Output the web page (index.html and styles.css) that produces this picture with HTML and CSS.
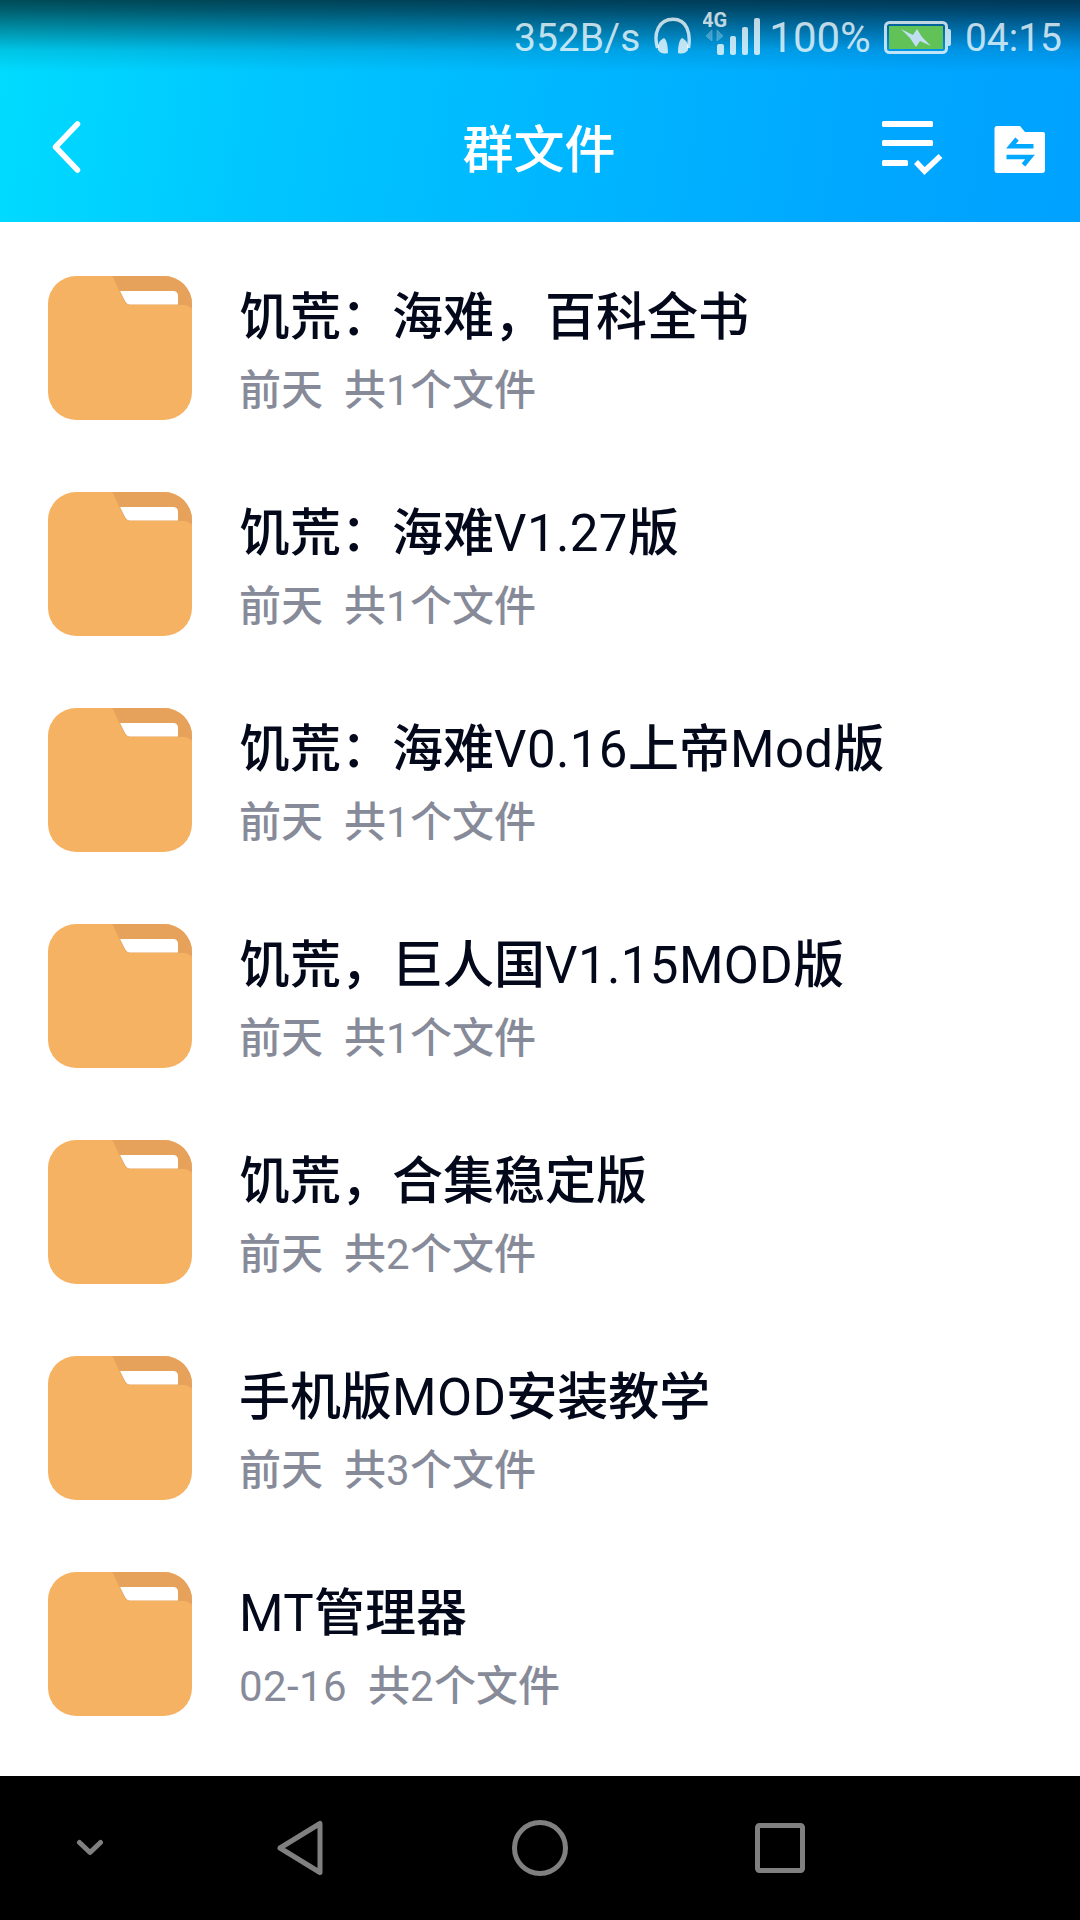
FILE: index.html
```
<!DOCTYPE html>
<html lang="zh-CN">
<head>
    <meta charset="UTF-8">
    <title>群文件</title>
    <link rel="stylesheet" href="styles.css">
</head>
<body>
    <svg class="defs" width="0" height="0">
        <symbol id="folder" viewBox="0 0 144 144">
            <rect width="144" height="144" rx="28" fill="#f6b263"/>
            <path d="M64 0H116A28 28 0 0 1 144 28V33Q141 29 135 29H82Q78 29 76 25L68 8Q66 2 64 0Z" fill="#e6a15b"/>
            <path d="M72 15H125Q130 15 130 20V28.500H82Q79 28.500 77 25Z" fill="#fff"/>
        </symbol>
    </svg>

    <div class="top">
        <div class="status-bar">
            <span class="speed">352B/s</span>
            <svg class="headphones" width="38" height="38" viewBox="0 0 38 38">
                <path d="M3.5 31C-1 16 5 2.300 19 2.300S37 16 34.500 31" fill="none" stroke="currentColor" stroke-width="3.400"/>
                <path d="M10 21C5 23 3 29 4 33C7 37 10 37 14 36C14 30 13 23 10 21ZM28 21C33 23 35 29 34 33C31 37 28 37 24 36C24 30 25 23 28 21Z" fill="currentColor"/>
            </svg>
            <svg class="signal" width="60" height="48" viewBox="0 0 60 48">
                <text x="-1" y="19" class="net">4G</text>
                <path d="M3 27L9 21V32ZM20 27L14 21V32Z" fill="currentColor" opacity=".35" transform="translate(0 1)" stroke="currentColor" stroke-width="1"/>
                <rect x="14" y="36" width="7" height="11" rx="2"/>
                <rect x="27" y="28" width="6" height="19" rx="2"/>
                <rect x="39" y="19" width="6" height="28" rx="2"/>
                <rect x="51" y="10" width="6" height="37" rx="2"/>
            </svg>
            <span class="percent">100%</span>
            <svg class="battery" width="68" height="34" viewBox="0 0 68 34">
                <rect x="1.500" y="1.500" width="61" height="30" rx="4" fill="none" stroke="currentColor" stroke-width="3"/>
                <rect x="5" y="5" width="54" height="23" fill="#61c257"/>
                <path d="M64 8h1q2 0 2 2v13q0 2-2 2h-1z" fill="currentColor"/>
                <path d="M17 8L29 14L33 8L38 16L47 25L36 20L32 26L26 17Z" fill="#c0dff2"/>
            </svg>
            <span class="time">04:15</span>
        </div>
        <div class="header">
            <svg class="back" width="30" height="56" viewBox="0 0 30 56">
                <path d="M26.500 5L4.500 28L26.500 51" fill="none" stroke="#fff" stroke-width="5.500" stroke-linecap="round" stroke-linejoin="round"/>
            </svg>
            <h1>群文件</h1>
            <div class="actions">
                <svg width="62" height="56" viewBox="0 0 62 56">
                    <g fill="#fff">
                        <rect x="1" y="1" width="51" height="6" rx="1.500"/>
                        <rect x="1" y="20" width="51" height="6" rx="1.500"/>
                        <rect x="1" y="40" width="26" height="6" rx="1.500"/>
                    </g>
                    <path d="M35 42L43.500 51L59.500 36" fill="none" stroke="#fff" stroke-width="5.500"/>
                </svg>
                <svg class="transfer" width="52" height="48" viewBox="0 0 52 48">
                    <path d="M3 0H26L31 6H49Q51 6 51 8V44Q51 47 48 47H3Q0.500 47 0.500 44V3Q0.500 0 3 0Z" fill="#fff"/>
                    <path d="M39.500 20.200H17L23 13M12.500 31H36L29.500 39" fill="none" stroke="#02a7ff" stroke-width="4.600"/>
                </svg>
            </div>
        </div>
    </div>

    <div class="list">
        <div class="item">
            <svg class="folder"><use href="#folder"/></svg>
            <div class="info">
                <div class="name">饥荒：海难，百科全书</div>
                <div class="meta">前天  共<span>1</span>个文件</div>
            </div>
        </div>
        <div class="item">
            <svg class="folder"><use href="#folder"/></svg>
            <div class="info">
                <div class="name">饥荒：海难<span>V1.27</span>版</div>
                <div class="meta">前天  共<span>1</span>个文件</div>
            </div>
        </div>
        <div class="item">
            <svg class="folder"><use href="#folder"/></svg>
            <div class="info">
                <div class="name">饥荒：海难<span>V0.16</span>上帝<span>Mod</span>版</div>
                <div class="meta">前天  共<span>1</span>个文件</div>
            </div>
        </div>
        <div class="item">
            <svg class="folder"><use href="#folder"/></svg>
            <div class="info">
                <div class="name">饥荒，巨人国<span>V1.15MOD</span>版</div>
                <div class="meta">前天  共<span>1</span>个文件</div>
            </div>
        </div>
        <div class="item">
            <svg class="folder"><use href="#folder"/></svg>
            <div class="info">
                <div class="name">饥荒，合集稳定版</div>
                <div class="meta">前天  共<span>2</span>个文件</div>
            </div>
        </div>
        <div class="item">
            <svg class="folder"><use href="#folder"/></svg>
            <div class="info">
                <div class="name">手机版<span>MOD</span>安装教学</div>
                <div class="meta">前天  共<span>3</span>个文件</div>
            </div>
        </div>
        <div class="item">
            <svg class="folder"><use href="#folder"/></svg>
            <div class="info">
                <div class="name"><span>MT</span>管理器</div>
                <div class="meta"><span>02-16</span>  共<span>2</span>个文件</div>
            </div>
        </div>
    </div>

    <div class="nav-bar">
        <div class="nav-btn nav-hide">
            <svg width="28" height="18" viewBox="0 0 28 18">
                <path d="M3.500 3.500L14 13.500L24.500 3.500" stroke-width="5"/>
            </svg>
        </div>
        <div class="nav-btn">
            <svg width="56" height="56" viewBox="0 0 56 56">
                <path d="M49 3.500V52.500L9 28Z" stroke-width="5" transform="translate(-1 0)"/>
            </svg>
        </div>
        <div class="nav-btn">
            <svg width="56" height="56" viewBox="0 0 56 56">
                <circle cx="28" cy="28" r="25.500" stroke-width="5"/>
            </svg>
        </div>
        <div class="nav-btn">
            <svg width="50" height="50" viewBox="0 0 50 50">
                <rect x="2.500" y="2.500" width="45" height="45" rx="2" stroke-width="5"/>
            </svg>
        </div>
    </div>
</body>
</html>
```
FILE: styles.css
```
* {
    box-sizing: border-box;
}

body {
    margin: 0;
    width: 1080px;
    height: 1920px;
    display: flex;
    flex-direction: column;
    background: #fff;
    font-family: Roboto, "Noto Sans CJK SC", sans-serif;
    overflow: hidden;
}

svg {
    display: block;
    flex: none;
}

.defs {
    position: absolute;
}

.top {
    height: 222px;
    background: linear-gradient(98deg, #00dcff 0%, #00c5ff 27%, #00b5ff 55%, #00a6ff 83%, #00a2ff 100%);
}

.status-bar {
    height: 72px;
    display: flex;
    justify-content: flex-end;
    align-items: flex-start;
    padding-right: 18px;
    color: rgba(255, 255, 255, 0.75);
    background: linear-gradient(rgba(0, 0, 0, 0.66), rgba(0, 0, 0, 0.57) 14%, rgba(0, 0, 0, 0.1) 70%, transparent);
    font-size: 39px;
    line-height: 46px;
}

.speed,
.time {
    margin-top: 15px;
}

.percent {
    margin-top: 15px;
    font-size: 42px;
}

.headphones {
    margin: 17px 11px 0 14px;
}

.signal {
    margin: 8px 6px 0 0;
    fill: currentColor;
}

.net {
    font-size: 20px;
    font-weight: bold;
}

.battery {
    margin: 21px 13px 0 13px;
}

.header {
    height: 150px;
    display: grid;
    grid-template-columns: 1fr auto 1fr;
    align-items: center;
    padding: 0 34px;
}

h1 {
    margin: 8px 2px 0 0;
    color: #fff;
    font-size: 51px;
    font-weight: 500;
    line-height: 60px;
}

.back {
    margin: -1px 0 0 17px;
}

.actions {
    display: flex;
    justify-content: flex-end;
    align-items: center;
    gap: 51px;
    padding-top: 2px;
}

.transfer {
    margin-top: 4px;
}

.list {
    flex: 1;
    padding-top: 18px;
}

.item {
    height: 216px;
    display: flex;
    align-items: center;
    padding-left: 48px;
}

.folder {
    width: 144px;
    height: 144px;
}

.info {
    margin-left: 47px;
    padding-top: 6px;
}

.name {
    margin-bottom: 4px;
    color: #03081a;
    font-size: 51px;
    font-weight: 500;
    line-height: 76px;
    white-space: pre;
}

.meta {
    color: #878b99;
    font-size: 42px;
    font-weight: 500;
    line-height: 62px;
    white-space: pre;
}

/* latin and digits stay regular next to the medium hanzi */
.name span,
.meta span {
    font-weight: 400;
    letter-spacing: 0.4px;
}

.nav-bar {
    height: 144px;
    display: flex;
    align-items: center;
    background: #000;
}

.nav-btn {
    width: 240px;
    display: flex;
    justify-content: center;
}

.nav-hide {
    width: 180px;
}

.nav-btn path,
.nav-btn circle,
.nav-btn rect {
    fill: none;
    stroke: #808080;
    stroke-linecap: round;
    stroke-linejoin: round;
}
```
